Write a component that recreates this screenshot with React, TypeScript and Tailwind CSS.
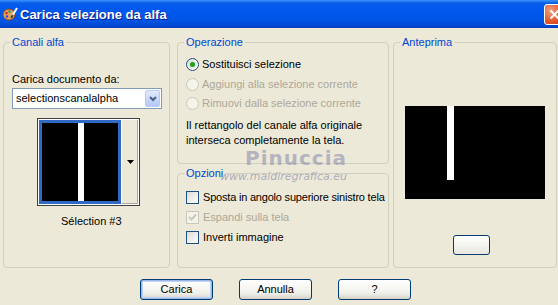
import React from "react";

const Radio = ({ checked, disabled }: { checked?: boolean; disabled?: boolean }) => (
  <span
    className={`relative inline-flex h-[13px] w-[13px] shrink-0 items-center justify-center rounded-full border ${
      disabled ? "border-[#cac8bb] bg-[#f5f4ea]" : "border-[#1c5180] bg-[linear-gradient(135deg,#dcdcd7,#ffffff)]"
    }`}
  >
    {checked && <span className="h-[5px] w-[5px] rounded-full bg-[#21a121] shadow-[0_0_1px_#5fd35f]" />}
  </span>
);

const Check = ({ checked, disabled }: { checked?: boolean; disabled?: boolean }) => (
  <span
    className={`relative inline-flex h-[13px] w-[13px] shrink-0 items-center justify-center border ${
      disabled ? "border-[#cac8bb] bg-[#f5f4ea]" : "border-[#1c5180] bg-[linear-gradient(135deg,#dcdcd7,#ffffff)]"
    }`}
  >
    {checked && (
      <svg width="9" height="9" viewBox="0 0 9 9">
        <path d="M1 4 L3.5 6.5 L8 1.5" stroke={disabled ? "#cac8bb" : "#21a121"} strokeWidth="2" fill="none" />
      </svg>
    )}
  </span>
);

const Group = ({
  title,
  className,
  children,
}: {
  title: string;
  className?: string;
  children?: React.ReactNode;
}) => (
  <div className={`relative rounded-[4px] border border-[#d0d0bf] ${className ?? ""}`}>
    <span className="absolute left-[6px] top-[-8px] whitespace-nowrap bg-[#ece9d8] px-[2px] text-[11px] leading-[14px] text-[#0046d5]">
      {title}
    </span>
    {children}
  </div>
);

const Btn = ({ label, def }: { label: string; def?: boolean }) => (
  <button
    className={`flex h-[21px] w-[73px] items-center justify-center rounded-[3px] border border-[#003c74] bg-[linear-gradient(180deg,#ffffff,#f0f0ea_70%,#d6d0c5)] text-[11px] text-black ${
      def ? "shadow-[inset_0_0_0_1px_#9cb7e6,inset_0_0_0_2px_#bcd4f6]" : ""
    }`}
  >
    {label}
  </button>
);

export default function App() {
  return (
    <div
      className="relative flex h-[305px] w-[558px] flex-col overflow-hidden whitespace-nowrap bg-[#ece9d8] text-[11px] text-black"
      style={{ fontFamily: '"Liberation Sans", Arial, sans-serif' }}
    >
      {/* Title bar */}
      <div className="flex h-[28px] shrink-0 items-center bg-[linear-gradient(180deg,#3d95ff_0px,#0a5fe8_3px,#0058ee_8px,#0055e5_20px,#0047d0_26px,#003dc0_28px)] pl-[2px]">
        <svg width="16" height="16" viewBox="0 0 16 16" className="shrink-0">
          <ellipse cx="7" cy="8.5" rx="6" ry="5.5" fill="#e0a060" stroke="#8a4a1a" strokeWidth="1" />
          <circle cx="4.5" cy="7" r="1.2" fill="#d02020" />
          <circle cx="7.5" cy="5.5" r="1.2" fill="#20a040" />
          <circle cx="5" cy="10.5" r="1.2" fill="#2050d0" />
          <path d="M9 12 L15 2" stroke="#ffffff" strokeWidth="2" />
          <path d="M9 12 L11 9" stroke="#603010" strokeWidth="2" />
        </svg>
        <span
          className="ml-[2px] mt-[1px] text-[13px] font-bold text-white [text-shadow:1px_1px_0_#0a1e8c]"
          style={{ fontFamily: '"Liberation Sans", Arial, sans-serif' }}
        >
          Carica selezione da alfa
        </span>
        <div className="ml-auto mr-[-7px] flex h-[21px] w-[21px] items-center justify-center self-center rounded-[3px] border border-white bg-[radial-gradient(circle_at_30%_30%,#f0a080,#e0552a_60%,#c23a10)]">
          <svg width="11" height="11" viewBox="0 0 11 11">
            <path d="M1.5 1.5 L9.5 9.5 M9.5 1.5 L1.5 9.5" stroke="white" strokeWidth="2" />
          </svg>
        </div>
      </div>

      {/* Groups */}
      <div className="mt-[14px] flex h-[226px] pl-[3px]">
        <Group title="Canali alfa" className="h-[226px] w-[167px]">
          <div className="flex flex-col pl-[8px] pt-[29px]">
            <span className="leading-[14px]">Carica documento da:</span>
            <div className="mt-[2px] flex h-[21px] w-[150px] items-center border border-[#7f9db9] bg-white">
              <span className="flex-1 pl-[3px]">selectionscanalalpha</span>
              <div className="mr-[1px] flex h-[17px] w-[15px] items-center justify-center rounded-[2px] border border-[#b9c9ef] bg-[linear-gradient(180deg,#e2eafe,#b4c8f6)]">
                <svg width="8" height="6" viewBox="0 0 8 6">
                  <path d="M1 1 L4 4 L7 1" stroke="#4d6185" strokeWidth="2" fill="none" />
                </svg>
              </div>
            </div>
            <div className="ml-[25px] mt-[9px] flex h-[88px] w-[103px] border border-[#404040] bg-white p-[1px]">
              <div className="flex h-[84px] w-[82px] border-[3px] border-[#316ac5] bg-black pl-[36px]">
                <div className="h-full w-[6px] bg-white" />
              </div>
              <div className="flex flex-1 items-center justify-center border-l border-white bg-[#ece9d8] shadow-[inset_-1px_-1px_0_#aca899]">
                <svg width="7" height="4" viewBox="0 0 7 4">
                  <path d="M0 0 H7 L3.5 4 Z" fill="black" />
                </svg>
              </div>
            </div>
            <span className="ml-[49px] mt-[8px] leading-[14px]">Sélection #3</span>
          </div>
        </Group>

        <div className="ml-[7px] flex w-[212px] flex-col">
          <Group title="Operazione" className="h-[122px]">
            <div className="flex flex-col pl-[8px] pt-[14px]">
              <div className="flex h-[14px] items-center gap-[3px]">
                <Radio checked />
                <span>Sostituisci selezione</span>
              </div>
              <div className="mt-[6px] flex h-[14px] items-center gap-[3px] text-[#aca899]">
                <Radio disabled />
                <span>Aggiungi alla selezione corrente</span>
              </div>
              <div className="mt-[5px] flex h-[14px] items-center gap-[3px] text-[#aca899]">
                <Radio disabled />
                <span>Rimuovi dalla selezione corrente</span>
              </div>
              <p className="mt-[8px] leading-[15px]">
                Il rettangolo del canale alfa originale
                <br />
                interseca completamente la tela.
              </p>
            </div>
          </Group>
          <Group title="Opzioni" className="mt-[9px] h-[95px]">
            <div className="flex flex-col pl-[8px] pt-[16px]">
              <div className="flex h-[14px] items-center gap-[4px]">
                <Check />
                <span className="tracking-[-0.2px]">Sposta in angolo superiore sinistro tela</span>
              </div>
              <div className="mt-[6px] flex h-[14px] items-center gap-[4px] text-[#aca899]">
                <Check checked disabled />
                <span>Espandi sulla tela</span>
              </div>
              <div className="mt-[6px] flex h-[14px] items-center gap-[4px]">
                <Check />
                <span>Inverti immagine</span>
              </div>
            </div>
          </Group>
        </div>

        <Group title="Anteprima" className="ml-[4px] h-[226px] w-[164px]">
          <div className="flex flex-col items-center pt-[63px]">
            <div className="flex h-[93px] w-[140px] bg-black pl-[42px]">
              <div className="h-[74px] w-[7px] bg-white" />
            </div>
            <div className="ml-[-8px] mt-[36px] h-[20px] w-[37px] rounded-[3px] border border-[#003c74] bg-[linear-gradient(180deg,#ffffff,#e8e8e0)]" />
          </div>
        </Group>
      </div>

      {/* Buttons */}
      <div className="mt-[11px] flex gap-[26px] pl-[140px]">
        <Btn label="Carica" def />
        <Btn label="Annulla" />
        <Btn label="?" />
      </div>

      {/* watermark */}
      <div
        className="pointer-events-none absolute left-[245px] top-[148px] text-[20px] font-bold leading-[20px] tracking-[1px] text-[#8e8fae]/60"
        style={{ fontFamily: '"DejaVu Sans", sans-serif' }}
      >
        Pinuccia
      </div>
      <div
        className="pointer-events-none absolute left-[220px] top-[169px] text-[11px] italic text-[#8e8fae]/70"
        style={{ fontFamily: '"DejaVu Sans", sans-serif' }}
      >
        www.maidiregrafica.eu
      </div>
    </div>
  );
}
